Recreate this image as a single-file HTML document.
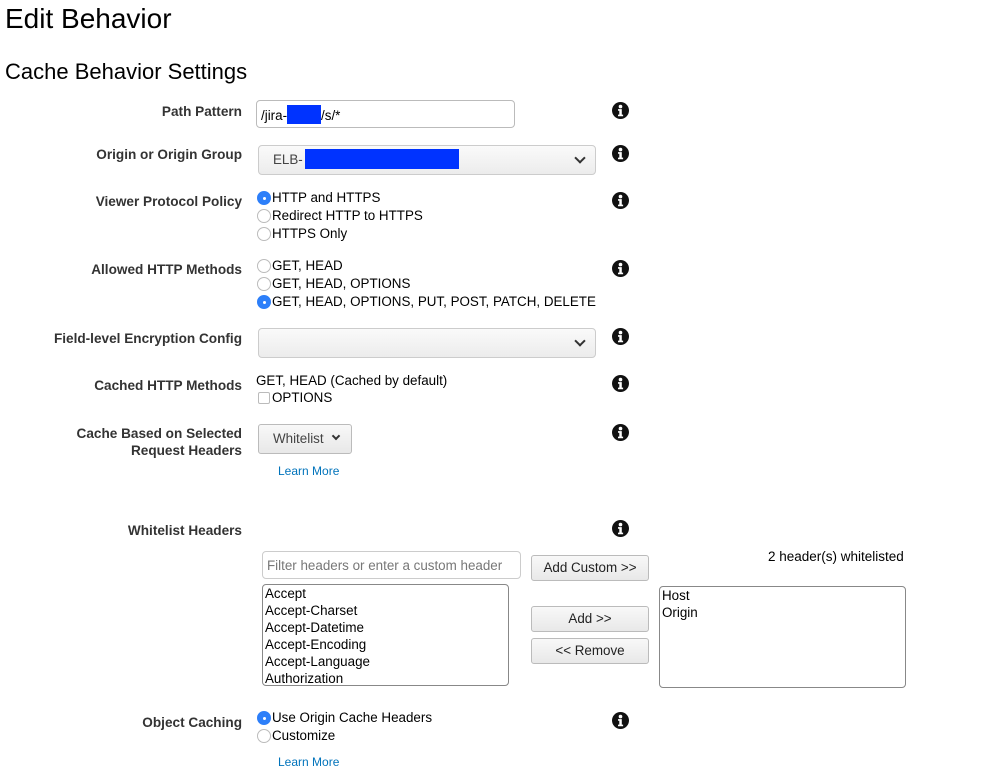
<!DOCTYPE html>
<html><head><meta charset="utf-8"><style>
body{margin:0;width:999px;height:769px;background:#fff;font-family:"Liberation Sans",sans-serif;color:#000;position:relative;overflow:hidden}
.a{position:absolute;white-space:nowrap}
.lb{position:absolute;right:757px;font-weight:bold;font-size:13.6px;color:#333;text-align:right;line-height:17px}
.t{font-size:13.4px;line-height:18px}
.i{position:absolute;left:612px;width:17px;height:17px}
.r{position:absolute;border:1px solid #bbb;border-radius:50%;background:#fff;box-sizing:border-box;width:14px;height:14px}
.r.on{background:#2d7ff9;border-color:#2d7ff9}
.r.on::after{content:"";position:absolute;left:4.5px;top:4.5px;width:3px;height:3px;border-radius:50%;background:#fff}
.sel{position:absolute;border:1px solid #ccc;border-radius:4px;background:linear-gradient(#fafafa,#ececec);box-sizing:border-box}
.btn{position:absolute;border:1px solid #bbb;border-radius:3px;background:linear-gradient(#f8f8f8,#e8e8e8);box-sizing:border-box;font-size:13.4px;text-align:center;color:#222}
.box{position:absolute;border:1px solid #888;border-radius:4px;box-sizing:border-box;font-size:13.4px;line-height:17px;padding:0 2px}
.lm{position:absolute;left:278px;font-size:12px;color:#0073bb}
.chev{position:absolute;width:6px;height:6px;border-right:2px solid #333;border-bottom:2px solid #333;transform:rotate(45deg)}
</style></head><body>
<svg width="0" height="0" style="position:absolute"><defs><g id="inf"><circle cx="8.5" cy="8.5" r="8.5" fill="#111"/><circle cx="8.5" cy="4.6" r="1.8" fill="#fff"/><path d="M6 7.1h3.8v5.5h1.3v1.7H6v-1.7h1.3V8.8H6z" fill="#fff"/></g></defs></svg>
<div class="a" style="left:5px;top:3px;font-size:28px">Edit Behavior</div>
<div class="a" style="left:5px;top:59px;font-size:22px">Cache Behavior Settings</div>

<div class="lb" style="top:103px">Path Pattern</div>
<div class="box" style="left:256px;top:100px;width:259px;height:28px;border-color:#bbb;padding:4px 4px" ><span class="t">/jira-<span style="display:inline-block;width:34px;height:19px;background:#0033ff;vertical-align:-4px"></span>/s/*</span></div>
<svg class="i" style="top:102px"><use href="#inf"/></svg>

<div class="lb" style="top:146px">Origin or Origin Group</div>
<div class="sel" style="left:258px;top:145px;width:338px;height:30px"></div>
<div class="a t" style="left:273px;top:151px;color:#444">ELB-</div>
<div class="a" style="left:305px;top:149px;width:154px;height:20px;background:#0033ff"></div>
<div class="chev" style="left:576px;top:154px"></div>
<svg class="i" style="top:145px"><use href="#inf"/></svg>

<div class="lb" style="top:193px">Viewer Protocol Policy</div>
<div class="r on" style="left:257px;top:191px"></div><div class="a t" style="left:272px;top:189px">HTTP and HTTPS</div>
<div class="r" style="left:257px;top:209px"></div><div class="a t" style="left:272px;top:207px">Redirect HTTP to HTTPS</div>
<div class="r" style="left:257px;top:227px"></div><div class="a t" style="left:272px;top:225px">HTTPS Only</div>
<svg class="i" style="top:192px"><use href="#inf"/></svg>

<div class="lb" style="top:261px">Allowed HTTP Methods</div>
<div class="r" style="left:257px;top:259px"></div><div class="a t" style="left:272px;top:257px">GET, HEAD</div>
<div class="r" style="left:257px;top:277px"></div><div class="a t" style="left:272px;top:275px">GET, HEAD, OPTIONS</div>
<div class="r on" style="left:257px;top:295px"></div><div class="a t" style="left:272px;top:293px">GET, HEAD, OPTIONS, PUT, POST, PATCH, DELETE</div>
<svg class="i" style="top:260px"><use href="#inf"/></svg>

<div class="lb" style="top:330px">Field-level Encryption Config</div>
<div class="sel" style="left:258px;top:328px;width:338px;height:30px"></div>
<div class="chev" style="left:576px;top:337px"></div>
<svg class="i" style="top:328px"><use href="#inf"/></svg>

<div class="lb" style="top:377px">Cached HTTP Methods</div>
<div class="a t" style="left:256px;top:372px">GET, HEAD (Cached by default)</div>
<div class="a" style="left:258px;top:392px;width:12px;height:12px;border:1px solid #bbb;border-radius:2px;box-sizing:border-box"></div>
<div class="a t" style="left:272px;top:389px">OPTIONS</div>
<svg class="i" style="top:375px"><use href="#inf"/></svg>

<div class="lb" style="top:425px">Cache Based on Selected<br>Request Headers</div>
<div class="btn" style="left:258px;top:424px;width:94px;height:30px;line-height:28px;text-align:left;padding-left:14px;color:#444">Whitelist</div>
<div class="chev" style="left:333px;top:433px;width:4px;height:4px"></div>
<div class="lm" style="top:464px">Learn More</div>
<svg class="i" style="top:424px"><use href="#inf"/></svg>

<div class="lb" style="top:522px">Whitelist Headers</div>
<svg class="i" style="top:520px"><use href="#inf"/></svg>
<div class="box" style="left:262px;top:551px;width:259px;height:28px;border-color:#ccc;padding:5px 4px;color:#777">Filter headers or enter a custom header</div>
<div class="btn" style="left:531px;top:555px;width:118px;height:26px;line-height:24px">Add Custom &gt;&gt;</div>
<div class="a" style="left:768px;top:549px;font-size:13.5px">2 header(s) whitelisted</div>
<div class="box" style="left:262px;top:584px;width:247px;height:102px;overflow:hidden">Accept<br>Accept-Charset<br>Accept-Datetime<br>Accept-Encoding<br>Accept-Language<br>Authorization</div>
<div class="btn" style="left:531px;top:606px;width:118px;height:26px;line-height:24px">Add &gt;&gt;</div>
<div class="btn" style="left:531px;top:638px;width:118px;height:26px;line-height:24px">&lt;&lt; Remove</div>
<div class="box" style="left:659px;top:586px;width:247px;height:102px">Host<br>Origin</div>

<div class="lb" style="top:714px">Object Caching</div>
<div class="r on" style="left:257px;top:711px"></div><div class="a t" style="left:272px;top:709px">Use Origin Cache Headers</div>
<div class="r" style="left:257px;top:729px"></div><div class="a t" style="left:272px;top:727px">Customize</div>
<svg class="i" style="top:712px"><use href="#inf"/></svg>
<div class="lm" style="top:755px">Learn More</div>
</body></html>
